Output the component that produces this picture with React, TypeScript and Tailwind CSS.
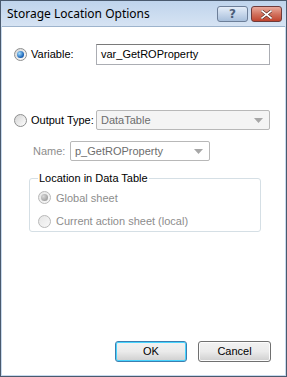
import React from "react";

function Radio({ checked, disabled }: { checked?: boolean; disabled?: boolean }) {
  return (
    <span
      className={`relative inline-flex h-[13px] w-[13px] shrink-0 items-center justify-center rounded-full border ${
        disabled
          ? "border-[#b8b8b8] bg-gradient-to-br from-[#e6e6e6] to-[#f8f8f8]"
          : "border-[#8e8f8f] bg-gradient-to-br from-[#d4d4d4] to-[#ffffff]"
      }`}
    >
      {checked && (
        <span
          className={`h-[7px] w-[7px] rounded-full ${
            disabled
              ? "bg-[radial-gradient(circle_at_35%_35%,#d8d8d8,#8a8a8a)]"
              : "bg-[radial-gradient(circle_at_35%_35%,#a8e0ff,#1a64b8_65%,#0d3f80)]"
          }`}
        />
      )}
    </span>
  );
}

function Arrow() {
  return (
    <svg width="9" height="5" viewBox="0 0 9 5" className="shrink-0">
      <path d="M0 0 H9 L4.5 5 Z" fill="#a7a7a7" />
    </svg>
  );
}

export default function App() {
  return (
    <div
      className="flex h-[377px] w-[287px] flex-col border border-[#4a5a6e] bg-[#c8daee] text-[11px] text-black"
      style={{ fontFamily: '"Liberation Sans", Arial, sans-serif' }}
    >
      {/* Title bar */}
      <div className="flex h-[25px] shrink-0 items-center justify-between bg-gradient-to-b from-[#bfd4ec] to-[#d6e3f3] pl-[6px] pr-[4px]">
        <span
          className="text-[12px] text-black"
          style={{ fontFamily: '"Noto Sans", "Open Sans", sans-serif' }}
        >
          Storage Location Options
        </span>
        <div className="flex items-center gap-[3px] pt-[1px]">
          <div className="flex h-[16px] w-[31px] items-center justify-center rounded-[3px] border border-[#6d7f99] bg-gradient-to-b from-[#e4edf8] via-[#c6d6ea] to-[#a8bfdb]">
            <span className="text-[12px] font-bold leading-none text-[#4c5e78]" style={{ fontFamily: '"DejaVu Sans", sans-serif' }}>?</span>
          </div>
          <div className="flex h-[16px] w-[31px] items-center justify-center rounded-[3px] border border-[#6e3b3b] bg-gradient-to-b from-[#e9a99c] via-[#d2735f] to-[#c0432e]">
            <svg width="11" height="9" viewBox="0 0 11 9">
              <path d="M1 1 L10 8 M10 1 L1 8" stroke="#5a2a22" strokeWidth="3" strokeLinecap="square" />
              <path d="M1 1 L10 8 M10 1 L1 8" stroke="#ffffff" strokeWidth="1.6" strokeLinecap="square" />
            </svg>
          </div>
        </div>
      </div>

      {/* Client area */}
      <div className="flex flex-1 flex-col border-t border-[#9db3cc] bg-white px-[12px] pb-[13px] ml-[1px] mr-[1px] mb-[1px]">
        <div className="mt-[17px] flex items-center">
          <Radio checked />
          <span className="ml-[4px] w-[65px]">Variable:</span>
          <div className="flex h-[21px] flex-1 items-center border border-[#abadb3] border-t-[#7a7a7a] pl-[4px] mr-[3px]">
            var_GetROProperty
          </div>
        </div>

        <div className="mt-[45px] flex items-center">
          <Radio />
          <span className="ml-[4px] w-[65px]">Output Type:</span>
          <div className="flex h-[20px] flex-1 items-center justify-between rounded-[2px] border border-[#b8b8b8] bg-[#f4f4f4] pl-[4px] pr-[6px] mr-[3px] text-[#6d6d6d]">
            <span>DataTable</span>
            <Arrow />
          </div>
        </div>

        <div className="mt-[11px] flex items-center pl-[19px]">
          <span className="w-[37px] text-[#8d8d8d]">Name:</span>
          <div className="flex h-[20px] w-[140px] items-center justify-between rounded-[2px] border border-[#b8b8b8] pl-[4px] pr-[6px] text-[#6d6d6d]">
            <span>p_GetROProperty</span>
            <Arrow />
          </div>
        </div>

        <fieldset className="mt-[9px] ml-[15px] mr-[12px] h-[62px] rounded-[3px] border border-[#d5dfe5] px-[8px] pt-[3px]">
          <legend className="px-[1px] text-black">Location in Data Table</legend>
          <div className="flex items-center">
            <Radio checked disabled />
            <span className="ml-[5px] text-[#8d8d8d]">Global sheet</span>
          </div>
          <div className="mt-[7px] flex items-center">
            <Radio disabled />
            <span className="ml-[5px] text-[#8d8d8d]">Current action sheet (local)</span>
          </div>
        </fieldset>

        <div className="mt-auto flex justify-end gap-[11px] pr-[2px]">
          <button className="h-[21px] w-[72px] rounded-[3px] border border-[#3c7fb1] bg-gradient-to-b from-[#f2f2f2] via-[#ebebeb] to-[#cfcfcf] shadow-[inset_0_0_0_1px_#48d4fe]">
            OK
          </button>
          <button className="h-[21px] w-[73px] rounded-[3px] border border-[#707070] bg-gradient-to-b from-[#f2f2f2] via-[#ebebeb] to-[#cfcfcf] shadow-[inset_0_0_0_1px_#fcfcfc]">
            Cancel
          </button>
        </div>
      </div>
    </div>
  );
}
